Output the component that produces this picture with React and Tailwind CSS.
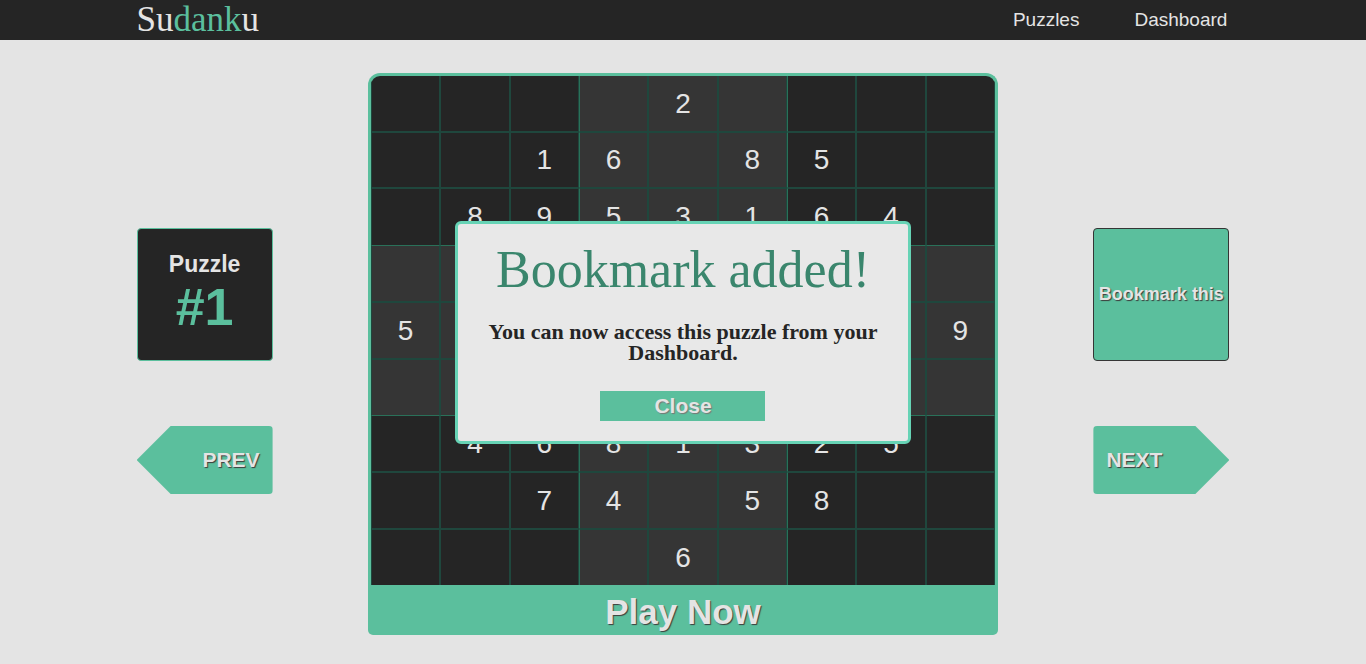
import { useState } from "react";

const ROWS = [
  "....2....",
  "..16.85..",
  ".8953164.",
  ".........",
  "5.......9",
  ".........",
  ".4681325.",
  "..74.58..",
  "....6....",
];

const TEXT_SHADOW = "[text-shadow:1px_1px_1px_#3c3c3c]";

function Header() {
  return (
    <header className="bg-[#252525]">
      <nav className="mx-auto flex h-10 w-4/5 items-center justify-between text-[#e4e4e4]">
        <a href="#home" className="font-['Liberation_Serif',serif] text-[35px] leading-10">
          Su<span className="text-[#5bbf9d]">dank</span>u
        </a>
        <div className="flex gap-[55px] pr-[2px] text-[19px] leading-10">
          <a href="#puzzles">Puzzles</a>
          <a href="#dashboard">Dashboard</a>
        </div>
      </nav>
    </header>
  );
}

function Cell({ value, row, col }) {
  const boxRow = Math.floor(row / 3);
  const boxCol = Math.floor(col / 3);
  const shade = (boxRow + boxCol) % 2 ? "bg-[#353535]" : "bg-[#252525]";
  const top =
    row % 3 ? "border-t border-t-[#1f473d]" : row ? "border-t border-t-[#2a7159]" : "";
  const bottom = row % 3 === 2 ? "" : "border-b border-b-[#1f473d]";
  const left = col && col % 3 === 0 ? "border-l-[#2a7159]" : "border-l-[#1f473d]";
  return (
    <div
      className={`flex items-center justify-center border-x border-r-[#1f473d] ${left} ${top} ${bottom} ${shade}`}
    >
      {value === "." ? "" : value}
    </div>
  );
}

function Board() {
  return (
    <section className="w-full max-w-[630px]">
      <div className="overflow-hidden rounded-t-xl border-x-3 border-t-3 border-[#5bbf9d] bg-[#5bbf9d]">
        <div className="grid h-[509px] grid-cols-9 grid-rows-[56fr_56fr_57fr_57fr_57fr_56fr_57fr_57fr_56fr] text-[28px] leading-8 text-[#e4e4e4]">
          {ROWS.map((line, row) =>
            [...line].map((value, col) => (
              <Cell key={`${row}-${col}`} value={value} row={row} col={col} />
            ))
          )}
        </div>
      </div>
      <button
        type="button"
        className={`block h-[50px] w-full rounded-b-[5px] bg-[#5bbf9d] pb-px pt-1 text-[35px] leading-none font-bold text-[#e4e4e4] ${TEXT_SHADOW}`}
      >
        Play Now
      </button>
    </section>
  );
}

function BookmarkDialog({ onClose }) {
  return (
    <div className="fixed inset-0 flex items-center justify-center">
      <div
        role="dialog"
        aria-labelledby="dialog-title"
        className="flex w-1/3 flex-col items-center rounded-md border-3 border-[#66d3b5] bg-[#e8e8e8] px-5 pt-4 pb-5 text-center font-['Liberation_Serif',serif]"
      >
        <h2 id="dialog-title" className="text-[52px] leading-15 text-[#3a866d]">
          Bookmark added!
        </h2>
        <p className="mt-[21px] text-[22px] leading-[21px] font-bold text-[#252525]">
          You can now access this puzzle from your Dashboard.
        </p>
        <button
          type="button"
          onClick={onClose}
          className="mt-7 h-[30px] w-[165px] bg-[#5bbf9d] font-['Liberation_Sans',sans-serif] text-[21px] leading-[30px] font-bold text-[#e4e4e4] [text-shadow:1px_1px_1px_#777777]"
        >
          Close
        </button>
      </div>
    </div>
  );
}

export default function App() {
  const [open, setOpen] = useState(true);
  return (
    <div className="min-h-screen bg-[#e4e4e4] font-['Liberation_Sans',Arial,sans-serif]">
      <Header />
      <main className="mx-auto flex w-4/5 justify-between pt-[33px]">
        <aside className="flex w-[136px] shrink-0 flex-col gap-[65px] pt-[155px]">
          <div className="flex h-[133px] flex-col items-center rounded border border-[#5bbf9d] bg-[#252525] pt-5 font-bold">
            <span className="text-[23px] leading-[30px] text-[#e4e4e4]">Puzzle</span>
            <span className="text-[52px] leading-[56px] text-[#5bbf9d]">#1</span>
          </div>
          <button
            type="button"
            className={`h-[68px] rounded-sm bg-[#5bbf9d] pr-[13px] text-right text-[21px] font-bold text-[#e4e4e4] [clip-path:polygon(25%_0,100%_0,100%_100%,25%_100%,0_50%)] ${TEXT_SHADOW}`}
          >
            PREV
          </button>
        </aside>
        <Board />
        <aside className="flex w-[136px] shrink-0 flex-col gap-[65px] pt-[155px]">
          <button
            type="button"
            onClick={() => setOpen(true)}
            className={`h-[133px] rounded border border-[#353535] bg-[#5bbf9d] text-[18px] font-bold whitespace-nowrap text-[#e4e4e4] ${TEXT_SHADOW}`}
          >
            Bookmark this
          </button>
          <button
            type="button"
            className={`h-[68px] rounded-sm bg-[#5bbf9d] pl-[13px] text-left text-[21px] font-bold text-[#e4e4e4] [clip-path:polygon(0_0,75%_0,100%_50%,75%_100%,0_100%)] ${TEXT_SHADOW}`}
          >
            NEXT
          </button>
        </aside>
      </main>
      {open && <BookmarkDialog onClose={() => setOpen(false)} />}
    </div>
  );
}
